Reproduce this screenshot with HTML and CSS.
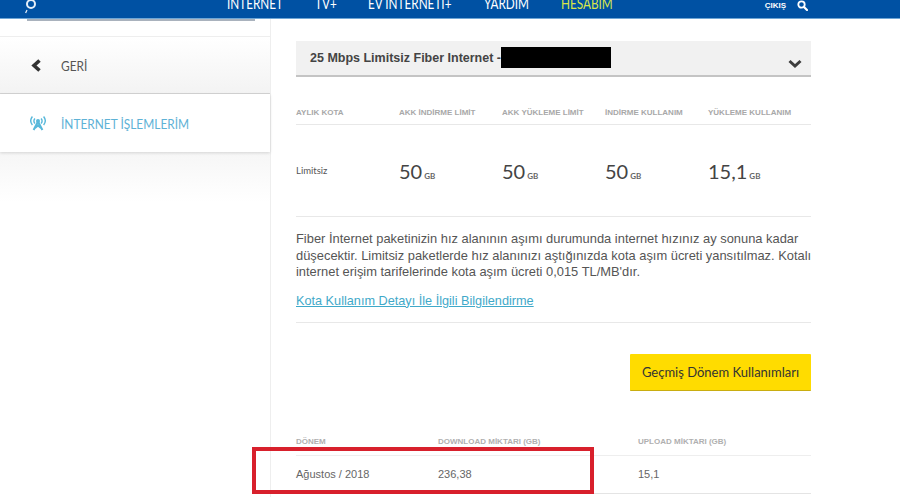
FILE: index.html
```html
<!DOCTYPE html>
<html lang="tr">
<head>
<meta charset="utf-8">
<title>İnternet İşlemlerim</title>
<link rel="stylesheet" href="styles.css">
</head>
<body>
<header class="topbar">
  <svg class="logo" width="14" height="16" viewBox="0 0 14 16"><circle cx="7" cy="4" r="4" fill="none" stroke="#e6eff8" stroke-width="2"/><path d="M3 10 L1.6 13" fill="none" stroke="#e6eff8" stroke-width="1.2"/></svg>
  <nav class="mainnav">
    <span class="nav-item nav-internet">İNTERNET</span>
    <span class="nav-item nav-tv">TV+</span>
    <span class="nav-item nav-ev">EV İNTERNETİ+</span>
    <span class="nav-item nav-help">YARDIM</span>
    <span class="nav-item nav-account">HESABIM</span>
  </nav>
  <div class="tools">
    <span class="logout">ÇIKIŞ</span>
    <svg width="11" height="11" viewBox="0 0 11 11"><circle cx="4.5" cy="4.5" r="3.2" fill="none" stroke="#fff" stroke-width="1.8"/><path d="M7 7 L10 10" stroke="#fff" stroke-width="2.2" stroke-linecap="round"/></svg>
  </div>
</header>
<div class="page">
  <aside class="sidebar">
    <div class="search-strip"><div class="search-line"></div></div>
    <div class="back-row">
      <svg class="back-icon" width="11" height="13" viewBox="0 0 11 13"><path d="M8.5 1.5 L3 6.5 L8.5 11.5" fill="none" stroke="#333" stroke-width="3.6"/></svg>
      <span class="side-label">GERİ</span>
    </div>
    <div class="menu-row">
      <svg class="menu-icon" width="16" height="16" viewBox="0 0 16 16" fill="none" stroke="#58b8da" stroke-width="1.4"><circle cx="8" cy="6" r="2" fill="#58b8da" stroke="none"/><path d="M8 6.5 L3.6 15 M8 6.5 L12.4 15 M5 13 L8 10.5 L11 13" stroke-width="2"/><path d="M4.9 8.5 A4 4 0 0 1 4.9 3.5 M11.1 8.5 A4 4 0 0 0 11.1 3.5 M2.4 10 A6.8 6.8 0 0 1 2.4 1.5 M13.6 10 A6.8 6.8 0 0 0 13.6 1.5"/></svg>
      <span class="side-label">İNTERNET İŞLEMLERİM</span>
    </div>
    <div class="side-fade"></div>
  </aside>
  <main class="content">
    <div class="package">
      <span class="package-name">25 Mbps Limitsiz Fiber Internet -</span>
      <span class="redaction"></span>
      <svg class="chevron" width="14" height="10" viewBox="0 0 14 10"><path d="M1.5 2 L7 7 L12.5 2" fill="none" stroke="#3d3d3d" stroke-width="3"/></svg>
    </div>
    <div class="quota-head">
      <span>AYLIK KOTA</span><span>AKK İNDİRME LİMİT</span><span>AKK YÜKLEME LİMİT</span><span>İNDİRME KULLANIM</span><span>YÜKLEME KULLANIM</span>
    </div>
    <div class="quota-row">
      <span class="quota-label">Limitsiz</span>
      <span class="value">50<small>GB</small></span>
      <span class="value">50<small>GB</small></span>
      <span class="value">50<small>GB</small></span>
      <span class="value">15,1<small>GB</small></span>
    </div>
    <p class="info">Fiber İnternet paketinizin hız alanının aşımı durumunda internet hızınız ay sonuna kadar düşecektir. Limitsiz paketlerde hız alanınızı aştığınızda kota aşım ücreti yansıtılmaz. Kotalı internet erişim tarifelerinde kota aşım ücreti 0,015 TL/MB'dır.</p>
    <div class="link-row"><a class="detail-link" href="#">Kota Kullanım Detayı İle İlgili Bilgilendirme</a></div>
    <div class="action-row"><button class="history-btn" type="button">Geçmiş Dönem Kullanımları</button></div>
    <div class="usage-head"><span>DÖNEM</span><span>DOWNLOAD MİKTARI (GB)</span><span>UPLOAD MİKTARI (GB)</span></div>
    <div class="usage-row"><span>Ağustos / 2018</span><span>236,38</span><span>15,1</span></div>
  </main>
</div>
<div class="highlight"></div>
</body>
</html>
```
FILE: styles.css
```css
* { box-sizing: border-box; }
html, body { margin: 0; height: 497px; overflow: hidden; }
body { position: relative; background: #fff; font-family: "Liberation Sans", Arial, sans-serif; color: #555; }

.topbar { position: relative; height: 19px; background: #0051a3; border-bottom: 1px solid #6ea6d6; overflow: hidden; display: flex; }
.logo { margin: 0 0 0 24px; flex: none; }
.mainnav { position: absolute; left: 227px; top: -5px; display: flex; font-family: Lato, sans-serif; font-size: 14.5px; line-height: 18px; color: #fff; }
.nav-item { display: block; white-space: nowrap; transform: scaleX(.81); transform-origin: left center; }
.nav-internet { width: 88px; }
.nav-tv { width: 53px; }
.nav-ev { width: 116px; }
.nav-help { width: 77px; }
.nav-account { color: #d8e54a; width: 60px; }
.tools { margin-left: auto; margin-right: 92px; display: flex; align-items: center; gap: 11px; height: 16px; margin-top: -3px; }
.logout { font-size: 8px; font-weight: 700; color: #fff; }

.page { display: flex; height: 478px; }
.sidebar { width: 271px; flex: none; border-right: 1px solid #eee; display: flex; flex-direction: column; font-family: Lato, sans-serif; }
.search-strip { height: 18px; border-bottom: 1px solid #eee; }
.search-line { margin: 0 15px 0 27px; height: 2px; background: #a9b2bd; }
.back-row { height: 57px; display: flex; align-items: center; padding-left: 31px; gap: 19px; background: linear-gradient(#fff, #f3f3f3); border-bottom: 1px solid #d4d4d4; font-size: 14px; color: #555; }
.back-icon { flex: none; }
.menu-row { height: 58px; display: flex; align-items: center; padding-left: 30px; gap: 15px; background: #fff; color: #5eb2d6; font-size: 14px; box-shadow: 0 1px 3px rgba(0,0,0,.14); position: relative; }
.menu-icon { flex: none; }
.side-label { display: block; white-space: nowrap; transform: scaleX(.85); transform-origin: left center; }
.side-fade { height: 50px; background: linear-gradient(#f6f6f6, #fff); }

.content { width: 515px; margin-left: 25px; flex: none; }
.package { margin-top: 22px; height: 36px; background: #f1f1f1; border-bottom: 2px solid #c4c4c4; display: flex; align-items: center; padding-left: 14px; position: relative; }
.package-name { font-size: 12.5px; font-weight: 700; color: #444; }
.redaction { width: 110px; height: 21px; background: #000; position: absolute; left: 205px; top: 6px; }
.chevron { position: absolute; right: 9px; top: 18px; }

.quota-head { margin-top: 31px; height: 17px; display: grid; grid-template-columns: repeat(5, 103px); border-bottom: 1px solid #e8e8e8; font-size: 8px; font-weight: 700; color: #a8a8a8; }
.quota-row { height: 92px; display: grid; grid-template-columns: repeat(5, 103px); align-items: center; border-bottom: 1px solid #e8e8e8; }
.quota-label { font-family: Lato, sans-serif; font-size: 9.5px; color: #555; }
.value { font-family: Lato, sans-serif; font-size: 20px; color: #444; }
.value small { font-size: 8px; margin-left: 2px; color: #666; font-weight: 700; }

.info { margin: 14px 0 0; font-size: 12.9px; line-height: 16.5px; color: #555; width: 525px; }
.link-row { margin-top: 13px; height: 29px; border-bottom: 1px solid #e8e8e8; font-size: 12.7px; }
.detail-link { color: #3fa9c9; }
.action-row { margin-top: 31px; display: flex; justify-content: flex-end; }
.history-btn { width: 181px; height: 37px; border: 0; border-bottom: 1px solid #c9ad10; border-radius: 1px; background: #ffdc00; font-family: Lato, sans-serif; font-size: 13px; color: #333; padding: 0; }
.usage-head { margin-top: 45px; height: 20px; padding-top: 1px; display: grid; grid-template-columns: 142px 200px 1fr; border-bottom: 1px solid #eee; font-size: 8px; font-weight: 700; color: #b0b0b0; }
.usage-row { height: 38px; display: grid; grid-template-columns: 142px 200px 1fr; align-items: center; border-bottom: 1px solid #e4e4e4; font-size: 11px; color: #666; }

.highlight { position: absolute; left: 252px; top: 447px; width: 342px; height: 47px; border: 4px solid #d8202c; }
```
